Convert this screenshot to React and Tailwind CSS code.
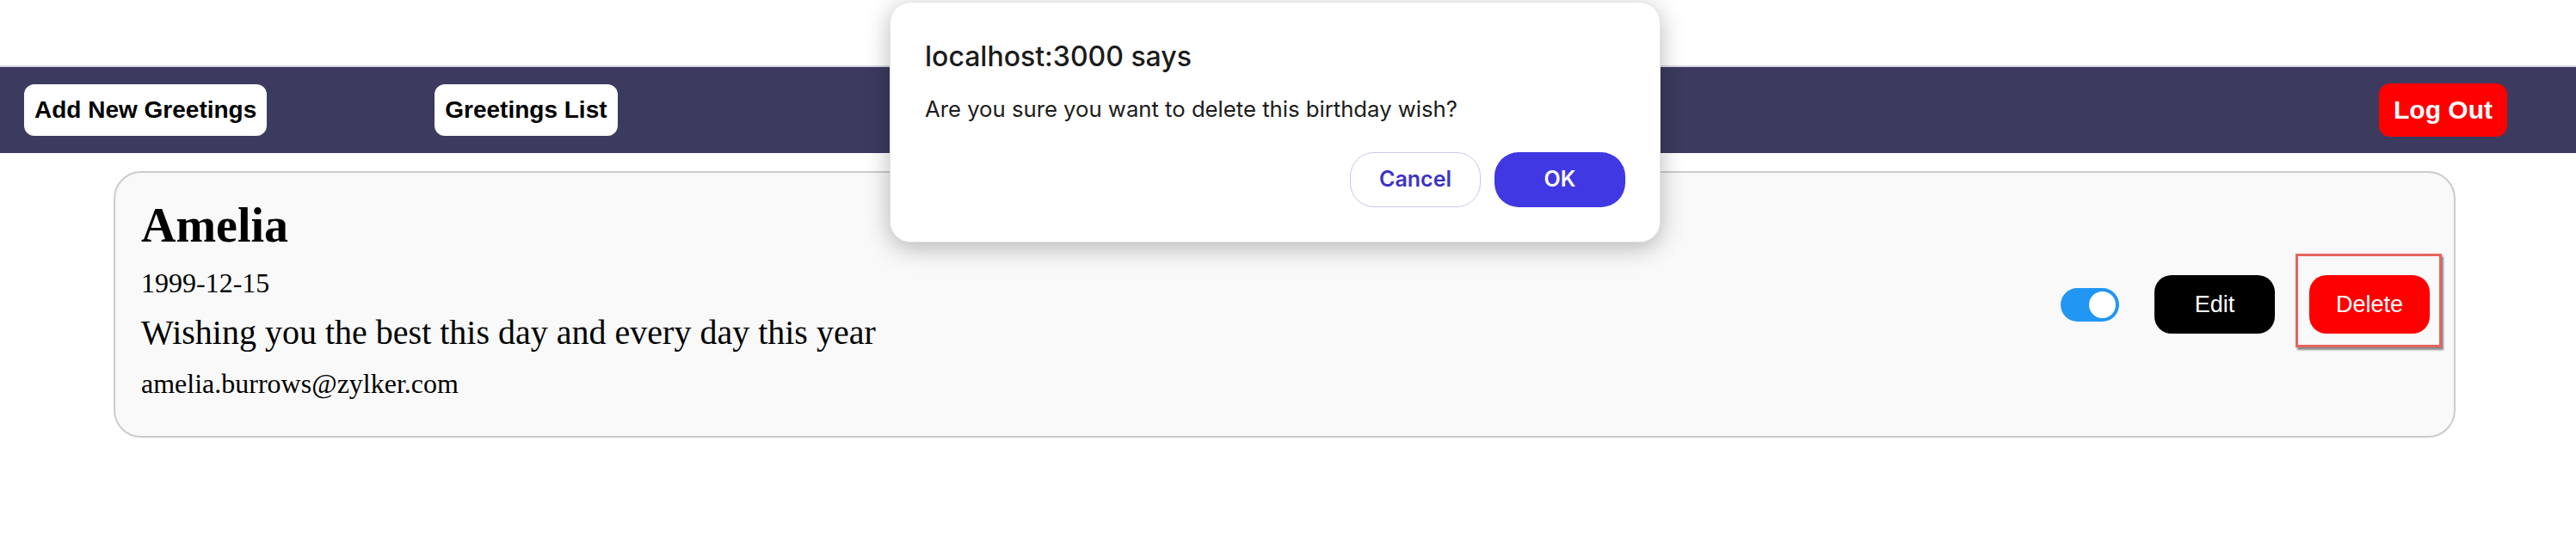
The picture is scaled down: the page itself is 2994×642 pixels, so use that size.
export default function App() {
  return (
    <div className="relative w-[2994px] h-[642px] bg-white overflow-hidden" style={{ fontFamily: '"Liberation Serif", serif' }}>
      {/* Navbar */}
      <nav className="mt-[76px] h-[102px] border-t-2 border-[#d9d9e6] bg-[#3c3b5f] flex items-center pl-[28px] pr-[80px]" style={{ fontFamily: '"Liberation Sans", Arial, sans-serif' }}>
        <button className="bg-white text-black font-bold text-[28px] leading-[32px] px-[12px] py-[14px] rounded-[12px]">Add New Greetings</button>
        <button className="ml-[195px] bg-white text-black font-bold text-[28px] leading-[32px] px-[12px] py-[14px] rounded-[12px]">Greetings List</button>
        <button className="ml-auto bg-[#ff0000] text-white font-bold text-[30px] leading-[34px] px-[17px] py-[14px] rounded-[13px]">Log Out</button>
      </nav>

      {/* Card */}
      <div className="ml-[132px] mt-[21px] w-[2722px] border-2 border-[#cccccc] rounded-[32px] bg-[#f9f9f9] pl-[30px] pr-[28px] pt-[29px] pb-[41px] flex items-center justify-between">
        <div className="flex flex-col text-black">
          <h2 className="text-[56px] leading-[64px] font-bold">Amelia</h2>
          <p className="mt-[15px] text-[32px] leading-[40px]">1999-12-15</p>
          <p className="mt-[14px] text-[40px] leading-[48px]">Wishing you the best this day and every day this year</p>
          <p className="mt-[15px] text-[32px] leading-[40px]">amelia.burrows@zylker.com</p>
        </div>
        <div className="mt-[12px] flex items-center" style={{ fontFamily: '"Liberation Sans", Arial, sans-serif' }}>
          <div className="w-[68px] h-[39px] rounded-full bg-[#2196f3] flex items-center justify-end pr-[4px]">
            <div className="w-[31px] h-[31px] rounded-full bg-white"></div>
          </div>
          <button className="ml-[41px] w-[140px] h-[68px] rounded-[20px] bg-black text-white text-[27px] leading-[32px]">Edit</button>
          <div className="relative ml-[40px]">
            <button className="w-[140px] h-[68px] rounded-[20px] bg-[#ff0000] text-white text-[27px] leading-[32px]">Delete</button>
            <span className="absolute -left-[16px] -top-[25px] w-[170px] h-[109px] border-[3px] border-[#e5645c] shadow-[2px_3px_2px_rgba(0,0,0,0.45)] pointer-events-none"></span>
          </div>
        </div>
      </div>

      {/* Dialog */}
      <div className="absolute left-[1034px] top-[2px] w-[896px] h-[280px] bg-white rounded-[24px] shadow-[0_6px_28px_rgba(0,0,0,0.28)] border border-[#e4e4e4] pt-[43px] px-[40px] pb-[40px] flex flex-col" style={{ fontFamily: 'Inter, "Noto Sans", sans-serif' }}>
        <div className="text-[32px] leading-[40px] font-medium text-[#1c1c1c]">localhost:3000 says</div>
        <div className="mt-[24px] text-[25.7px] leading-[34px] text-[#1c1c1c]">Are you sure you want to delete this birthday wish?</div>
        <div className="mt-auto flex justify-end gap-[16px]">
          <button className="w-[152px] h-[64px] rounded-[28px] border border-[#c9c8e6] bg-white text-[#3d35c4] text-[25px] font-semibold">Cancel</button>
          <button className="w-[152px] h-[64px] rounded-[28px] bg-[#4038e3] text-white text-[25px] font-semibold">OK</button>
        </div>
      </div>
    </div>
  );
}
